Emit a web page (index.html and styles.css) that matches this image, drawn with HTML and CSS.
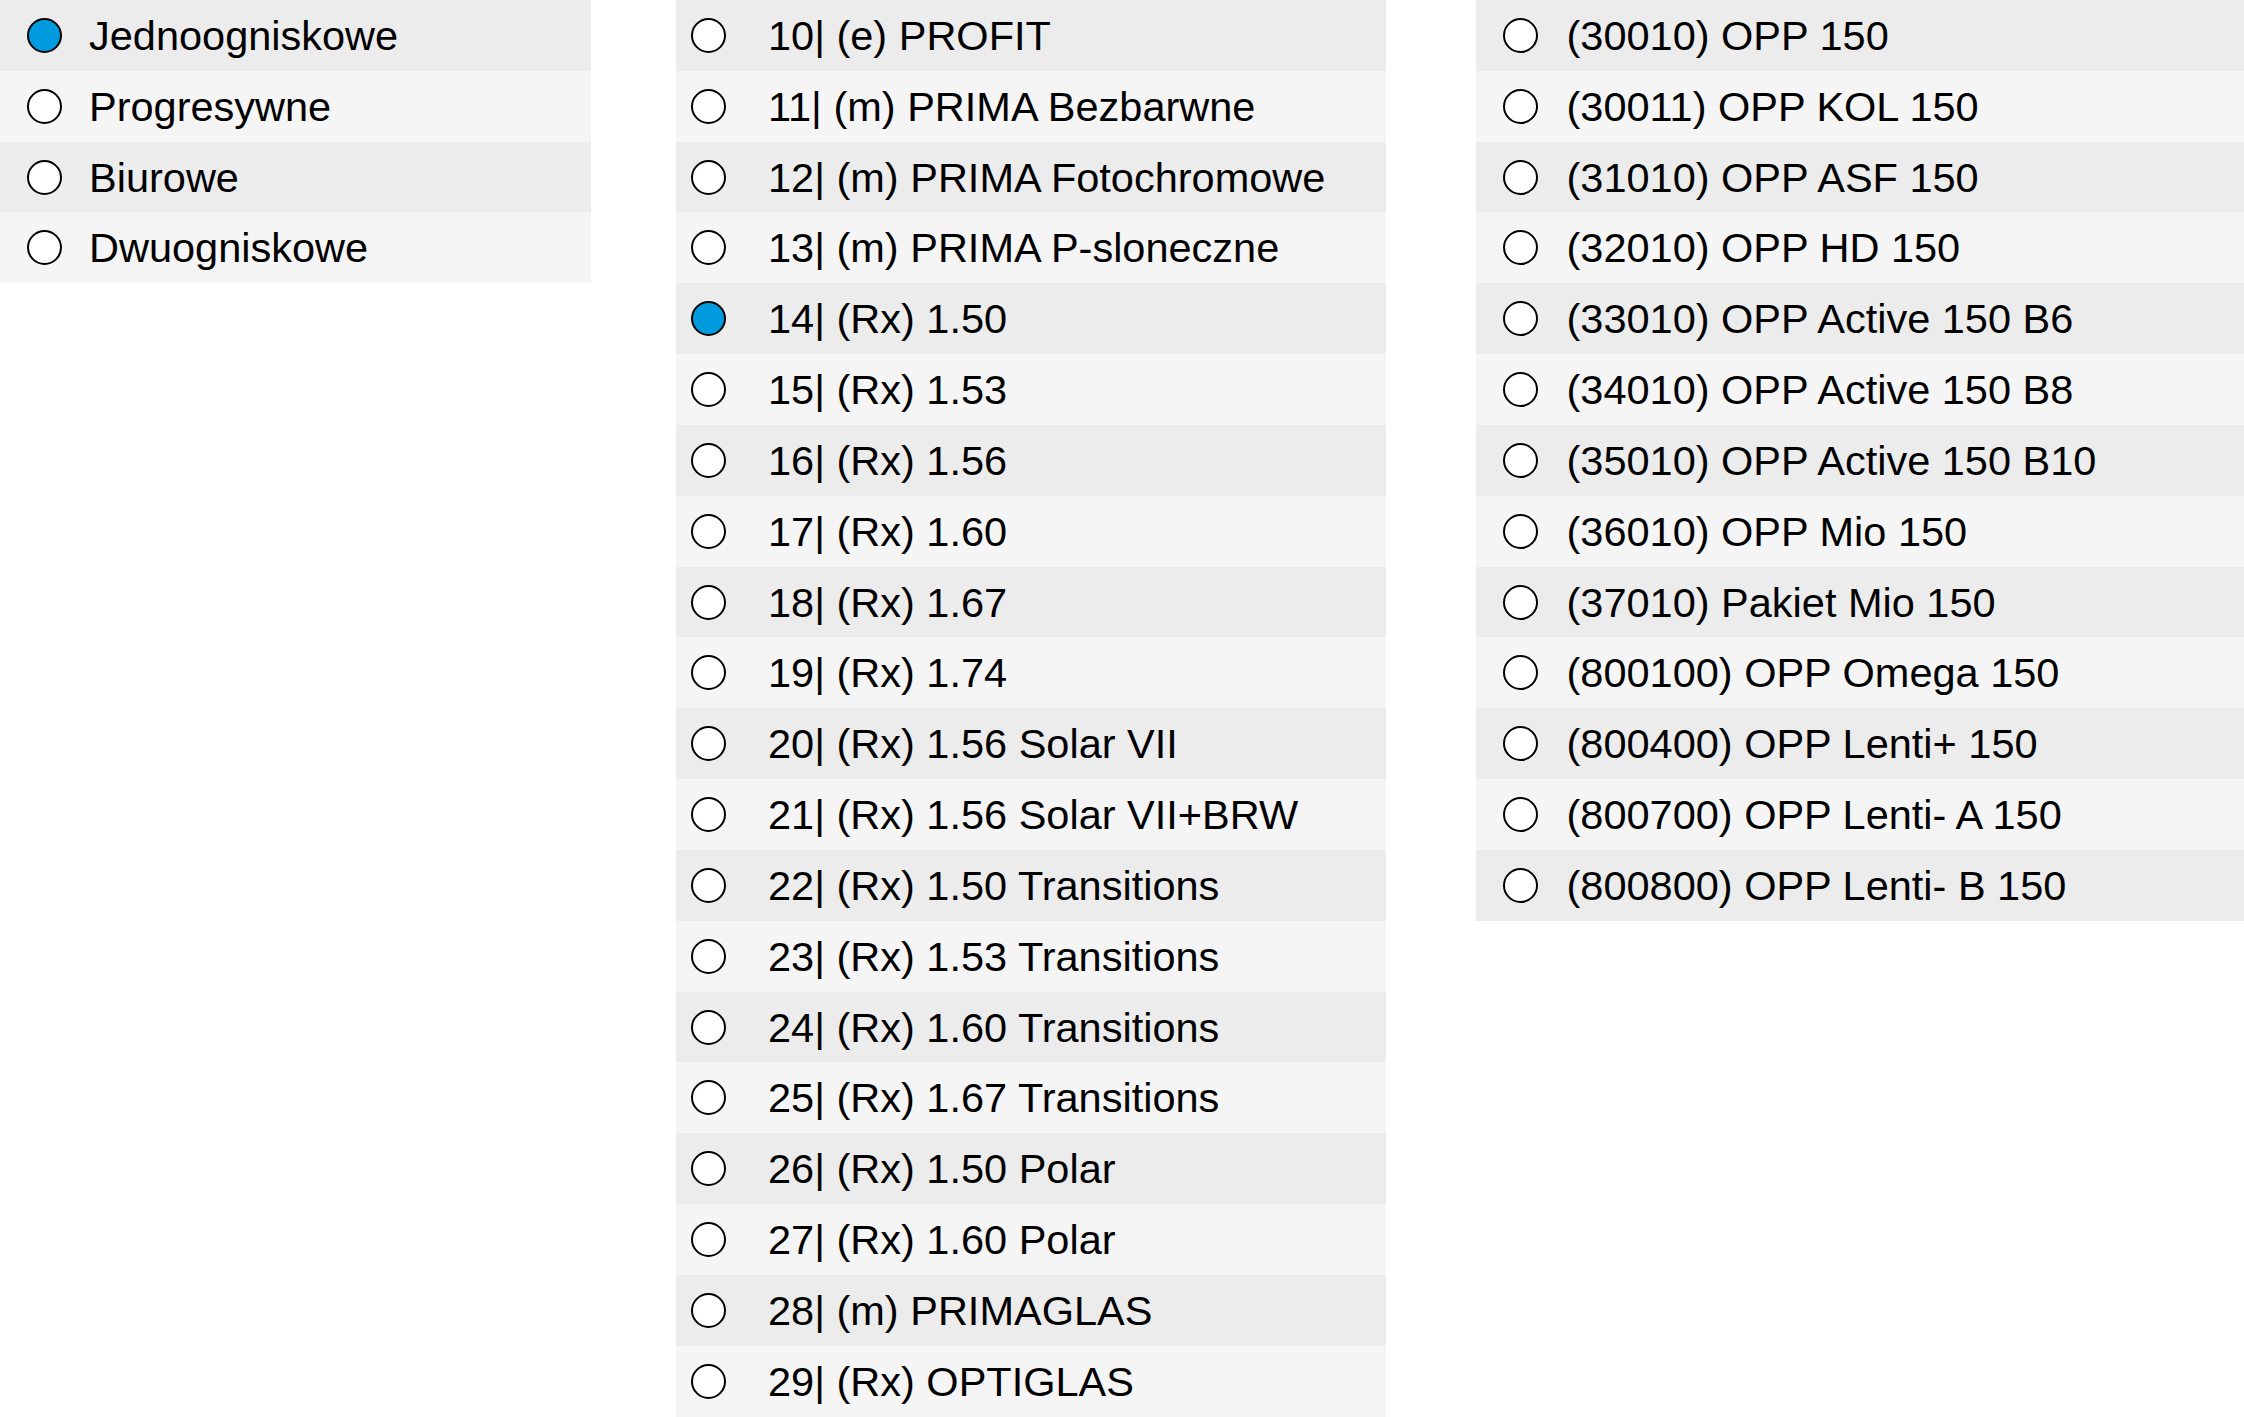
FILE: index.html
```html
<!DOCTYPE html>
<html lang="pl">
<head>
    <meta charset="UTF-8">
    <title>Wybór soczewek</title>
    <link rel="stylesheet" href="styles.css">
</head>
<body>
    <div class="lists">
        <div class="radio-list list-type">
            <label class="option"><input type="radio" name="type" checked><span class="text">Jednoogniskowe</span></label>
            <label class="option"><input type="radio" name="type"><span class="text">Progresywne</span></label>
            <label class="option"><input type="radio" name="type"><span class="text">Biurowe</span></label>
            <label class="option"><input type="radio" name="type"><span class="text">Dwuogniskowe</span></label>
        </div>

        <div class="radio-list list-material">
            <label class="option"><input type="radio" name="material"><span class="text">10| (e) PROFIT</span></label>
            <label class="option"><input type="radio" name="material"><span class="text">11| (m) PRIMA Bezbarwne</span></label>
            <label class="option"><input type="radio" name="material"><span class="text">12| (m) PRIMA Fotochromowe</span></label>
            <label class="option"><input type="radio" name="material"><span class="text">13| (m) PRIMA P-sloneczne</span></label>
            <label class="option"><input type="radio" name="material" checked><span class="text">14| (Rx) 1.50</span></label>
            <label class="option"><input type="radio" name="material"><span class="text">15| (Rx) 1.53</span></label>
            <label class="option"><input type="radio" name="material"><span class="text">16| (Rx) 1.56</span></label>
            <label class="option"><input type="radio" name="material"><span class="text">17| (Rx) 1.60</span></label>
            <label class="option"><input type="radio" name="material"><span class="text">18| (Rx) 1.67</span></label>
            <label class="option"><input type="radio" name="material"><span class="text">19| (Rx) 1.74</span></label>
            <label class="option"><input type="radio" name="material"><span class="text">20| (Rx) 1.56 Solar VII</span></label>
            <label class="option"><input type="radio" name="material"><span class="text">21| (Rx) 1.56 Solar VII+BRW</span></label>
            <label class="option"><input type="radio" name="material"><span class="text">22| (Rx) 1.50 Transitions</span></label>
            <label class="option"><input type="radio" name="material"><span class="text">23| (Rx) 1.53 Transitions</span></label>
            <label class="option"><input type="radio" name="material"><span class="text">24| (Rx) 1.60 Transitions</span></label>
            <label class="option"><input type="radio" name="material"><span class="text">25| (Rx) 1.67 Transitions</span></label>
            <label class="option"><input type="radio" name="material"><span class="text">26| (Rx) 1.50 Polar</span></label>
            <label class="option"><input type="radio" name="material"><span class="text">27| (Rx) 1.60 Polar</span></label>
            <label class="option"><input type="radio" name="material"><span class="text">28| (m) PRIMAGLAS</span></label>
            <label class="option"><input type="radio" name="material"><span class="text">29| (Rx) OPTIGLAS</span></label>
        </div>

        <div class="radio-list list-product">
            <label class="option"><input type="radio" name="product"><span class="text">(30010) OPP 150</span></label>
            <label class="option"><input type="radio" name="product"><span class="text">(30011) OPP KOL 150</span></label>
            <label class="option"><input type="radio" name="product"><span class="text">(31010) OPP ASF 150</span></label>
            <label class="option"><input type="radio" name="product"><span class="text">(32010) OPP HD 150</span></label>
            <label class="option"><input type="radio" name="product"><span class="text">(33010) OPP Active 150 B6</span></label>
            <label class="option"><input type="radio" name="product"><span class="text">(34010) OPP Active 150 B8</span></label>
            <label class="option"><input type="radio" name="product"><span class="text">(35010) OPP Active 150 B10</span></label>
            <label class="option"><input type="radio" name="product"><span class="text">(36010) OPP Mio 150</span></label>
            <label class="option"><input type="radio" name="product"><span class="text">(37010) Pakiet Mio 150</span></label>
            <label class="option"><input type="radio" name="product"><span class="text">(800100) OPP Omega 150</span></label>
            <label class="option"><input type="radio" name="product"><span class="text">(800400) OPP Lenti+ 150</span></label>
            <label class="option"><input type="radio" name="product"><span class="text">(800700) OPP Lenti- A 150</span></label>
            <label class="option"><input type="radio" name="product"><span class="text">(800800) OPP Lenti- B 150</span></label>
        </div>
    </div>
</body>
</html>
```

FILE: styles.css
```css
* {
    margin: 0;
    padding: 0;
    box-sizing: border-box;
}

body {
    font-family: 'Liberation Sans', Arial, sans-serif;
    background: #fff;
    color: #000;
}

.lists {
    display: flex;
    align-items: flex-start;
}

.radio-list {
    display: flex;
    flex-direction: column;
}

.list-type {
    width: 590.5px;
}

.list-material {
    width: 710px;
    margin-left: 85px;
}

.list-product {
    flex: 1;
    margin-left: 90.5px;
}

.option {
    display: flex;
    align-items: center;
    height: 70.83px;
    padding-left: 26.5px;
    background: #f5f5f5;
    font-size: 41.5px;
    cursor: pointer;
}

.option:nth-child(odd) {
    background: #ececec;
}

.option input {
    appearance: none;
    -webkit-appearance: none;
    flex: none;
    width: 35px;
    height: 35px;
    margin: 0;
    border: 2px solid #000;
    border-radius: 50%;
    background: #fff;
}

.option input:checked {
    background: #009ade;
}

.text {
    margin-left: 27.5px;
    padding-top: 1px;
    white-space: nowrap;
}

.list-material .option {
    padding-left: 15.5px;
}

.list-material .text {
    margin-left: 42px;
}

.list-product .text {
    margin-left: 29px;
}
```
